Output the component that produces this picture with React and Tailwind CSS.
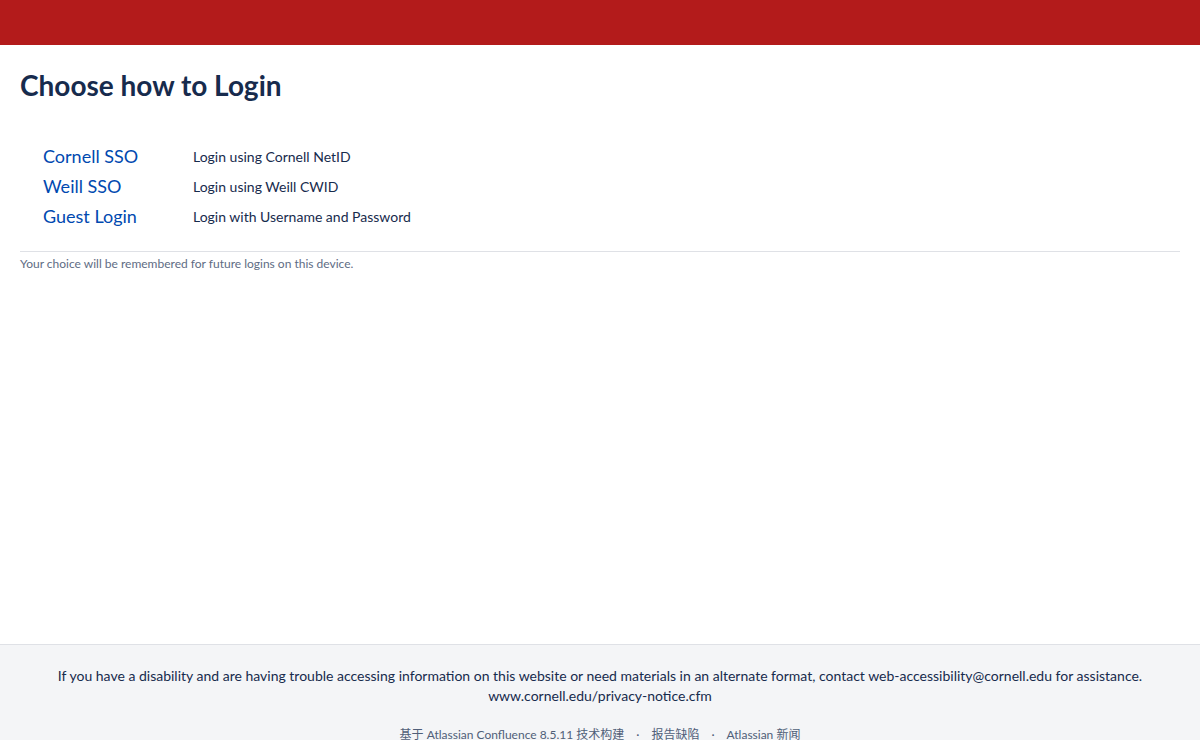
const options = [
  { name: 'Cornell SSO', desc: 'Login using Cornell NetID' },
  { name: 'Weill SSO', desc: 'Login using Weill CWID' },
  { name: 'Guest Login', desc: 'Login with Username and Password' },
];

const App = () => {
  return (
    <div className="bg-white text-[#172b4d] font-['Segoe_UI','Lato','Noto_Sans_CJK_SC',sans-serif]">
      <header className="h-[45px] bg-[#b31b1b]" />

      <main className="min-h-[599px] px-5 pt-[22px]">
        <h1 className="text-[28px] font-bold leading-[36px]">Choose how to Login</h1>

        <div className="mt-[40px] pl-[23px] flex flex-col gap-[4px]">
          {options.map((o) => (
            <div key={o.name} className="flex items-center h-[26px]">
              <a href="#" className="w-[150px] text-[18px] text-[#0049b0] hover:underline">{o.name}</a>
              <span className="text-[14px]">{o.desc}</span>
            </div>
          ))}
        </div>

        <div className="mt-[22px] border-t border-[#dfe1e6] pt-[3px]">
          <p className="text-[12px] text-[#5e6c84]">Your choice will be remembered for future logins on this device.</p>
        </div>
      </main>

      <footer className="border-t border-[#dfe1e6] bg-[#f4f5f7] pt-[21px] pb-8 text-center">
        <p className="text-[14px] leading-[20px]">
          If you have a disability and are having trouble accessing information on this website or need materials in an alternate format, contact web-accessibility@cornell.edu for assistance.
        </p>
        <p className="text-[14px] leading-[20px]">www.cornell.edu/privacy-notice.cfm</p>
        <ul className="mt-[20px] flex justify-center gap-3 text-[12px] text-[#505f79]">
          <li>基于 Atlassian Confluence 8.5.11 技术构建</li>
          <li>·</li>
          <li>报告缺陷</li>
          <li>·</li>
          <li>Atlassian 新闻</li>
        </ul>
      </footer>
    </div>
  );
};

export default App;
